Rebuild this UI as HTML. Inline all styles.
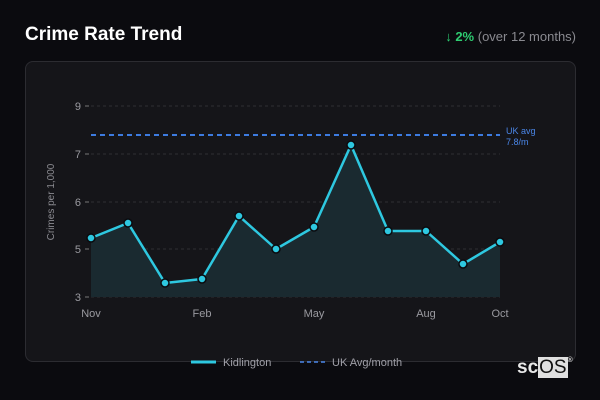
<!DOCTYPE html>
<html><head><meta charset="utf-8"><style>
html,body{margin:0;padding:0;background:#0b0b0f;width:600px;height:400px;overflow:hidden;font-family:"Liberation Sans","DejaVu Sans",sans-serif}
.t{position:absolute;left:25px;top:24px;color:#fff;font-weight:bold;font-size:19px;font-family:"Liberation Sans",sans-serif}
.r{position:absolute;right:24px;top:29px;font-size:13px;color:#8a8a90;font-family:"Liberation Sans",sans-serif}
.r b{color:#2ecc71}
.card{position:absolute;left:25px;top:61px;width:549px;height:299px;border:1px solid #2c2c31;border-radius:8px;background:#151519}
svg{position:absolute;left:0;top:0}
.logo{position:absolute;left:517px;top:357px;font-size:19px;color:#e8e8e8;font-family:"Liberation Sans",sans-serif;font-weight:bold}
.logo span{background:#e0e0e0;color:#111;padding:0 1px;font-weight:normal}
.logo sup{font-size:7px;vertical-align:top;color:#ccc}
</style></head><body>
<div class="t">Crime Rate Trend</div>
<div class="r"><b>↓ 2%</b> (over 12 months)</div>
<div class="card"></div>
<svg width="600" height="400" font-family="Liberation Sans,sans-serif">
<g stroke="#2e2e33" stroke-dasharray="3,3" stroke-width="1">
<line x1="91" y1="106" x2="500" y2="106"/><line x1="91" y1="154" x2="500" y2="154"/><line x1="91" y1="202" x2="500" y2="202"/><line x1="91" y1="249" x2="500" y2="249"/><line x1="91" y1="297" x2="500" y2="297"/>
</g>
<g stroke="#777" stroke-width="1"><line x1="85" y1="106" x2="89" y2="106"/><line x1="85" y1="154" x2="89" y2="154"/><line x1="85" y1="202" x2="89" y2="202"/><line x1="85" y1="249" x2="89" y2="249"/><line x1="85" y1="297" x2="89" y2="297"/></g>
<g fill="#9a9aa0" font-size="11" text-anchor="end"><text x="81" y="110">9</text><text x="81" y="158">7</text><text x="81" y="206">6</text><text x="81" y="253">5</text><text x="81" y="301">3</text></g>
<text transform="translate(54,202) rotate(-90)" fill="#8a8a90" font-size="10" text-anchor="middle">Crimes per 1,000</text>
<g fill="#9a9aa0" font-size="11" text-anchor="middle"><text x="91" y="317">Nov</text><text x="202" y="317">Feb</text><text x="314" y="317">May</text><text x="426" y="317">Aug</text><text x="500" y="317">Oct</text></g>
<polygon fill="#1a2a30" points="91,297 91,238 128,223 165,283 202,279 239,216 276,249 314,227 351,145 388,231 426,231 463,264 500,242 500,297"/>
<line x1="91" y1="135" x2="500" y2="135" stroke="#3d7be0" stroke-width="2" stroke-dasharray="5,4"/>
<text x="506" y="134" fill="#4a86e8" font-size="9">UK avg</text><text x="506" y="145" fill="#4a86e8" font-size="9">7.8/m</text>
<polyline fill="none" stroke="#2ec8e0" stroke-width="2.5" stroke-linejoin="round" points="91,238 128,223 165,283 202,279 239,216 276,249 314,227 351,145 388,231 426,231 463,264 500,242"/>
<g fill="#2ec8e0" stroke="#0b0b0f" stroke-width="1.5">
<circle cx="91" cy="238" r="4"/><circle cx="128" cy="223" r="4"/><circle cx="165" cy="283" r="4"/><circle cx="202" cy="279" r="4"/><circle cx="239" cy="216" r="4"/><circle cx="276" cy="249" r="4"/><circle cx="314" cy="227" r="4"/><circle cx="351" cy="145" r="4"/><circle cx="388" cy="231" r="4"/><circle cx="426" cy="231" r="4"/><circle cx="463" cy="264" r="4"/><circle cx="500" cy="242" r="4"/>
</g>
<line x1="191" y1="362" x2="216" y2="362" stroke="#2ec8e0" stroke-width="3"/>
<text x="223" y="366" fill="#a0a0a8" font-size="11">Kidlington</text>
<line x1="300" y1="362" x2="326" y2="362" stroke="#4a86e8" stroke-width="1.5" stroke-dasharray="4,3"/>
<text x="332" y="366" fill="#a0a0a8" font-size="11">UK Avg/month</text>
</svg>
<div class="logo">sc<span>OS</span><sup>®</sup></div>
</body></html>
